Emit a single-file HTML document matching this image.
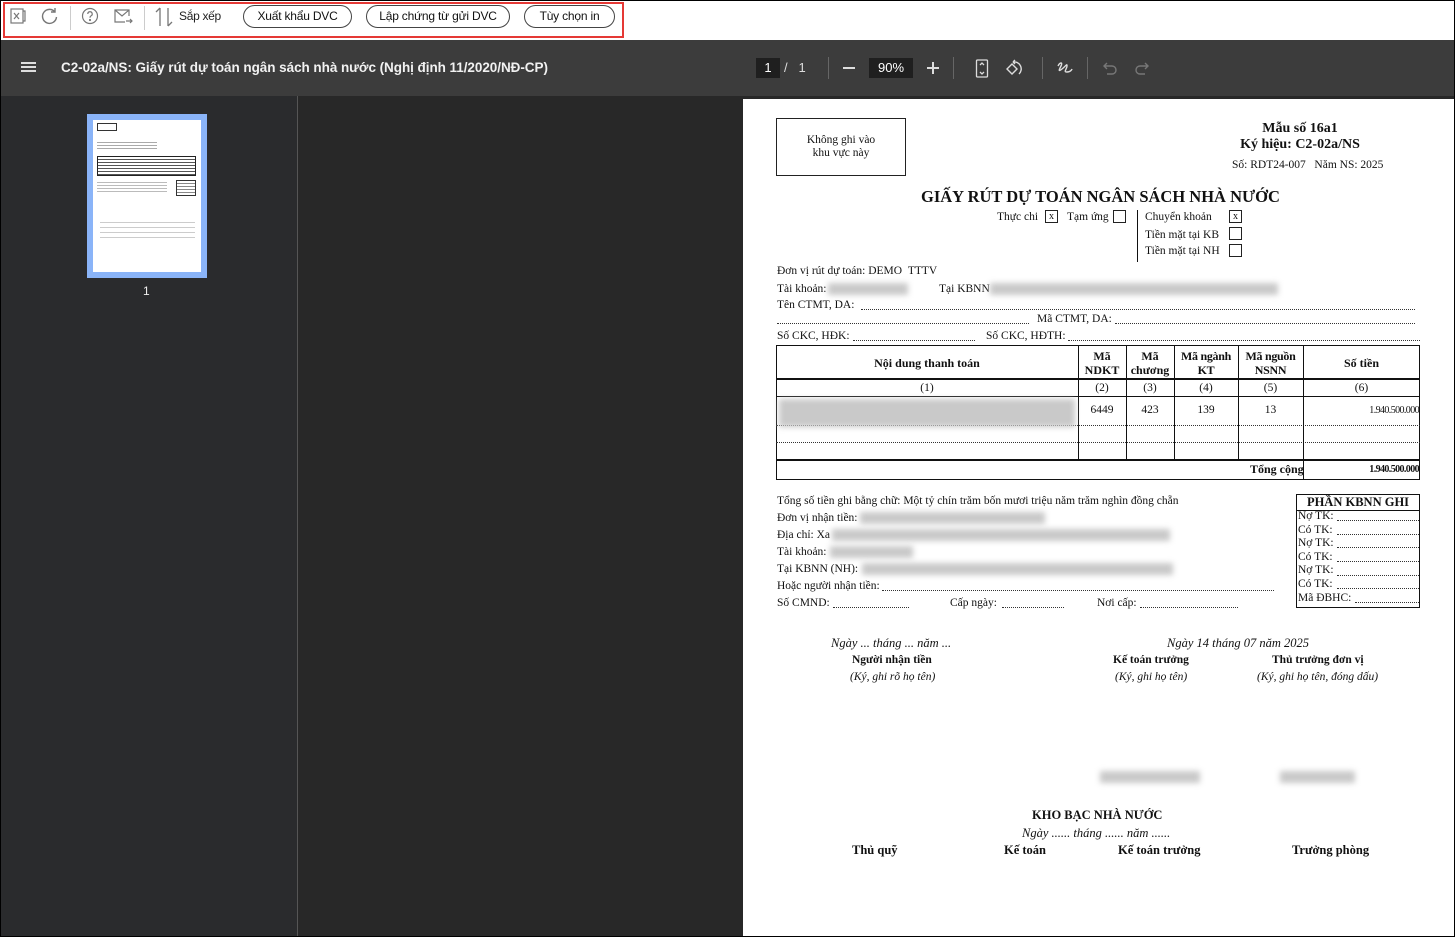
<!DOCTYPE html>
<html><head><meta charset="utf-8"><style>
*{margin:0;padding:0;box-sizing:border-box}
body{width:1455px;height:937px;overflow:hidden;position:relative;background:#fff;font-family:"Liberation Sans",sans-serif}
.a{position:absolute;white-space:nowrap}
.btn{position:absolute;top:5px;height:23px;border:1px solid #444;border-radius:12px;font-size:12px;line-height:21px;text-align:center;color:#111;letter-spacing:-0.2px}
.doc{font-family:"Liberation Serif",serif;font-size:11.5px;color:#111}
.b{font-weight:bold}.i{font-style:italic}
.blur{position:absolute;background:#c9c9c9;filter:blur(3px)}
.cb{position:absolute;width:13px;height:13px;border:1px solid #222;font-size:10px;line-height:11px;text-align:center}
.ln{position:absolute;background:#111}
.dl{position:absolute;border-top:1px dotted #333;height:0}
</style></head><body>
<div class="a" style="left:0;top:0;width:1455px;height:937px;border:1px solid #000;z-index:9;pointer-events:none"></div>
<div class="a" style="left:0;top:0;width:1455px;height:40px;background:#fff"></div>
<div class="a" style="left:3px;top:2px;width:621px;height:36px;border:2px solid #e53935"></div>
<svg class="a" style="left:9px;top:7px" width="18" height="18" viewBox="0 0 18 18" fill="none" stroke="#777" stroke-width="1.2"><rect x="2" y="2" width="12" height="14"/><path d="M14 4h2v10h-2M5 6l5 6M10 6l-5 6"/></svg>
<svg class="a" style="left:41px;top:7px" width="18" height="18" viewBox="0 0 18 18" fill="none" stroke="#777" stroke-width="1.4"><path d="M14 5A7 7 0 1 0 15.5 10"/><path d="M14 1v4h-4"/></svg>
<div class="a" style="left:70px;top:6px;width:1px;height:24px;background:#ccc"></div>
<svg class="a" style="left:81px;top:7px" width="18" height="18" viewBox="0 0 18 18" fill="none" stroke="#777" stroke-width="1.2"><circle cx="9" cy="9" r="7.5"/><path d="M6.8 7a2.2 2.2 0 1 1 3 2c-.7.4-.8.8-.8 1.8"/><circle cx="9" cy="13" r=".5" fill="#777"/></svg>
<svg class="a" style="left:114px;top:8px" width="19" height="17" viewBox="0 0 19 17" fill="none" stroke="#777" stroke-width="1.2"><path d="M15 8V2H1v12h10"/><path d="M1 2l7 6 7-6M12 13h6M16 11l2 2-2 2"/></svg>
<div class="a" style="left:144px;top:6px;width:1px;height:24px;background:#ccc"></div>
<svg class="a" style="left:155px;top:6px" width="18" height="22" viewBox="0 0 18 22" fill="none" stroke="#777" stroke-width="1.3"><path d="M5 2v18M1 6l4-4M13 2v18M17 16l-4 4"/></svg>
<div class="a" style="left:179px;top:9px;font-size:12px;color:#222;letter-spacing:-0.3px">Sắp xếp</div>
<div class="btn" style="left:243px;width:109px">Xuất khẩu DVC</div>
<div class="btn" style="left:366px;width:144px">Lập chứng từ gửi DVC</div>
<div class="btn" style="left:524px;width:91px">Tùy chọn in</div>
<div class="a" style="left:0;top:40px;width:1455px;height:56px;background:#3c3c3c"></div>
<div class="a" style="left:21px;top:62px;width:15px;height:2px;background:#ddd;box-shadow:0 4px 0 #ddd,0 8px 0 #ddd"></div>
<div class="a" style="left:61px;top:60px;font-size:13.5px;font-weight:bold;color:#f1f1f1;letter-spacing:-0.05px">C2-02a/NS: Giấy rút dự toán ngân sách nhà nước (Nghị định 11/2020/NĐ-CP)</div>
<div class="a" style="left:756px;top:58px;width:24px;height:20px;background:#1f1f1f;color:#fff;font-size:13px;text-align:center;line-height:20px">1</div>
<div class="a" style="left:784px;top:60px;color:#ddd;font-size:13px">/&nbsp;&nbsp;&nbsp;1</div>
<div class="a" style="left:828px;top:57px;width:1px;height:22px;background:#666"></div>
<div class="a" style="left:843px;top:67px;width:12px;height:2px;background:#ddd"></div>
<div class="a" style="left:869px;top:58px;width:44px;height:20px;background:#1f1f1f;color:#fff;font-size:13px;text-align:center;line-height:20px">90%</div>
<div class="a" style="left:927px;top:67px;width:12px;height:2px;background:#ddd"></div>
<div class="a" style="left:932px;top:62px;width:2px;height:12px;background:#ddd"></div>
<div class="a" style="left:953px;top:57px;width:1px;height:22px;background:#666"></div>
<svg class="a" style="left:975px;top:59px" width="14" height="19" viewBox="0 0 14 19" fill="none" stroke="#ddd" stroke-width="1.3"><rect x="1.5" y="1" width="11" height="17" rx="1"/><path d="M5 6l2-2 2 2M5 13l2 2 2-2"/></svg>
<svg class="a" style="left:1004px;top:59px" width="20" height="19" viewBox="0 0 20 19" fill="none" stroke="#ddd" stroke-width="1.4"><path d="M3 10l5-5 5 5-5 5z"/><path d="M9 3a7 7 0 0 1 6 12M9 3l2-2M9 3l2 2"/></svg>
<div class="a" style="left:1042px;top:57px;width:1px;height:22px;background:#666"></div>
<svg class="a" style="left:1057px;top:60px" width="16" height="16" viewBox="0 0 16 16" fill="none" stroke="#ddd" stroke-width="1.4"><path d="M1 6c2-4 5-4 3 0s-3 6 1 3 5-6 5-3-4 6 0 6 5-3 5-3"/></svg>
<div class="a" style="left:1087px;top:57px;width:1px;height:22px;background:#666"></div>
<svg class="a" style="left:1103px;top:61px" width="14" height="14" viewBox="0 0 14 14" fill="none" stroke="#777" stroke-width="1.4"><path d="M4 2L1 5l3 3M1 5h8a4 4 0 0 1 0 8H4"/></svg>
<svg class="a" style="left:1135px;top:61px" width="14" height="14" viewBox="0 0 14 14" fill="none" stroke="#777" stroke-width="1.4"><path d="M10 2l3 3-3 3M13 5H5a4 4 0 0 0 0 8h5"/></svg>
<div class="a" style="left:0;top:96px;width:297px;height:841px;background:#2a2b2d"></div>
<div class="a" style="left:297px;top:96px;width:1px;height:841px;background:#555"></div>
<div class="a" style="left:298px;top:96px;width:1157px;height:841px;background:#282828"></div>
<div class="a" style="left:87px;top:114px;width:120px;height:164px;background:#8ab4f8"></div>
<div class="a" style="left:93px;top:120px;width:108px;height:152px;background:#fff"></div>
<div class="a" style="left:97px;top:123px;width:20px;height:8px;border:1px solid #333"></div>
<div class="a" style="left:97px;top:156px;width:99px;height:20px;border:1px solid #222;background:repeating-linear-gradient(#fff 0 2px,#555 2px 3px)"></div>
<div class="a" style="left:176px;top:180px;width:20px;height:16px;border:1px solid #333;background:repeating-linear-gradient(#fff 0 2px,#888 2px 3px)"></div>
<div class="a" style="left:97px;top:140px;width:60px;height:10px;background:repeating-linear-gradient(#fff 0 2px,#aaa 2px 3px)"></div>
<div class="a" style="left:97px;top:180px;width:70px;height:14px;background:repeating-linear-gradient(#fff 0 2px,#bbb 2px 3px)"></div>
<div class="a" style="left:100px;top:218px;width:95px;height:20px;background:repeating-linear-gradient(#fff 0 4px,#ccc 4px 5px)"></div>
<div class="a" style="left:143px;top:284px;color:#eee;font-size:12px">1</div>
<div class="a" style="left:743px;top:99px;width:712px;height:838px;background:#fff"></div>
<div class="doc">
<div class="a" style="left:776px;top:118px;width:130px;height:58px;border:1px solid #222"></div>
<div class="a" style="left:776px;top:134px;width:130px;text-align:center;line-height:13px">Không ghi vào<br>khu vực này</div>
<div class="a b" style="left:1230px;top:121px;width:140px;text-align:center;font-size:14px">Mẫu số 16a1</div>
<div class="a b" style="left:1220px;top:137px;width:160px;text-align:center;font-size:14px">Ký hiệu: C2-02a/NS</div>
<div class="a" style="left:1232px;top:159px">Số: RDT24-007&nbsp;&nbsp;&nbsp;Năm NS: 2025</div>
<div class="a b" style="left:921px;top:187px;font-size:16.5px">GIẤY RÚT DỰ TOÁN NGÂN SÁCH NHÀ NƯỚC</div>
<div class="a" style="left:997px;top:211px">Thực chi</div><div class="cb" style="left:1045px;top:210px">x</div>
<div class="a" style="left:1067px;top:211px">Tạm ứng</div><div class="cb" style="left:1113px;top:210px"></div>
<div class="ln" style="left:1137px;top:210px;width:1px;height:52px"></div>
<div class="a" style="left:1145px;top:211px">Chuyển khoản</div><div class="cb" style="left:1229px;top:210px">x</div>
<div class="a" style="left:1145px;top:229px">Tiền mặt tại KB</div><div class="cb" style="left:1229px;top:227px"></div>
<div class="a" style="left:1145px;top:245px">Tiền mặt tại NH</div><div class="cb" style="left:1229px;top:244px"></div>
<div class="a" style="left:777px;top:265px">Đơn vị rút dự toán: DEMO&nbsp;&nbsp;TTTV</div>
<div class="a" style="left:777px;top:283px">Tài khoản:</div><div class="blur" style="left:828px;top:283px;width:80px;height:12px"></div>
<div class="a" style="left:939px;top:283px">Tại KBNN</div><div class="blur" style="left:990px;top:283px;width:288px;height:12px"></div>
<div class="a" style="left:777px;top:299px">Tên CTMT, DA:</div><div class="dl" style="left:861px;top:309px;width:554px"></div>
<div class="dl" style="left:777px;top:323px;width:252px"></div>
<div class="a" style="left:1037px;top:313px">Mã CTMT, DA:</div><div class="dl" style="left:1115px;top:323px;width:300px"></div>
<div class="a" style="left:777px;top:330px">Số CKC, HĐK:</div><div class="dl" style="left:853px;top:340px;width:122px"></div>
<div class="a" style="left:986px;top:330px">Số CKC, HĐTH:</div><div class="dl" style="left:1068px;top:340px;width:352px"></div>
<div class="a" style="left:776px;top:345px;width:644px;height:135px;border:1.5px solid #111"></div>
<div class="ln" style="left:776px;top:378px;width:644px;height:1.5px"></div>
<div class="ln" style="left:776px;top:396px;width:644px;height:1px"></div>
<div class="dl" style="left:776px;top:425px;width:644px"></div>
<div class="dl" style="left:776px;top:442px;width:644px"></div>
<div class="ln" style="left:776px;top:459px;width:644px;height:1.5px"></div>
<div class="ln" style="left:1078px;top:345px;width:1px;height:114px"></div>
<div class="ln" style="left:1126px;top:345px;width:1px;height:114px"></div>
<div class="ln" style="left:1174px;top:345px;width:1px;height:114px"></div>
<div class="ln" style="left:1238px;top:345px;width:1px;height:114px"></div>
<div class="ln" style="left:1303px;top:345px;width:1px;height:135px"></div>
<div class="a b" style="left:776px;top:356px;width:302px;text-align:center;font-size:12px">Nội dung thanh toán</div>
<div class="a b" style="left:1078px;top:349px;width:48px;text-align:center;font-size:12px;line-height:14px">Mã<br>NDKT</div>
<div class="a b" style="left:1126px;top:349px;width:48px;text-align:center;font-size:12px;line-height:14px">Mã<br>chương</div>
<div class="a b" style="left:1174px;top:349px;width:64px;text-align:center;font-size:12px;line-height:14px;letter-spacing:-0.3px">Mã ngành<br>KT</div>
<div class="a b" style="left:1238px;top:349px;width:65px;text-align:center;font-size:12px;line-height:14px;letter-spacing:-0.3px">Mã nguồn<br>NSNN</div>
<div class="a b" style="left:1303px;top:356px;width:117px;text-align:center;font-size:12px">Số tiền</div>
<div class="a" style="left:776px;top:382px;width:302px;text-align:center">(1)</div>
<div class="a" style="left:1078px;top:382px;width:48px;text-align:center">(2)</div>
<div class="a" style="left:1126px;top:382px;width:48px;text-align:center">(3)</div>
<div class="a" style="left:1174px;top:382px;width:64px;text-align:center">(4)</div>
<div class="a" style="left:1238px;top:382px;width:65px;text-align:center">(5)</div>
<div class="a" style="left:1303px;top:382px;width:117px;text-align:center">(6)</div>
<div class="blur" style="left:779px;top:399px;width:296px;height:28px"></div>
<div class="a" style="left:1078px;top:404px;width:48px;text-align:center">6449</div>
<div class="a" style="left:1126px;top:404px;width:48px;text-align:center">423</div>
<div class="a" style="left:1174px;top:404px;width:64px;text-align:center">139</div>
<div class="a" style="left:1238px;top:404px;width:65px;text-align:center">13</div>
<div class="a" style="left:1303px;top:405px;width:116px;text-align:right;font-size:10px;letter-spacing:-0.6px">1.940.500.000</div>
<div class="a b" style="left:1250px;top:462px;font-size:12px">Tổng cộng</div>
<div class="a b" style="left:1303px;top:464px;width:116px;text-align:right;font-size:10px;letter-spacing:-0.6px">1.940.500.000</div>
<div class="a" style="left:777px;top:495px">Tổng số tiền ghi bằng chữ: Một tỷ chín trăm bốn mươi triệu năm trăm nghìn đồng chẵn</div>
<div class="a" style="left:777px;top:512px">Đơn vị nhận tiền:</div><div class="blur" style="left:860px;top:512px;width:185px;height:12px"></div>
<div class="a" style="left:777px;top:529px">Địa chỉ: Xa</div><div class="blur" style="left:832px;top:529px;width:338px;height:12px"></div>
<div class="a" style="left:777px;top:546px">Tài khoản:</div><div class="blur" style="left:830px;top:546px;width:83px;height:12px"></div>
<div class="a" style="left:777px;top:563px">Tại KBNN (NH):</div><div class="blur" style="left:862px;top:563px;width:311px;height:12px"></div>
<div class="a" style="left:777px;top:580px">Hoặc người nhận tiền:</div><div class="dl" style="left:882px;top:590px;width:392px"></div>
<div class="a" style="left:777px;top:597px">Số CMND:</div><div class="dl" style="left:833px;top:607px;width:76px"></div>
<div class="a" style="left:950px;top:597px">Cấp ngày:</div><div class="dl" style="left:1002px;top:607px;width:62px"></div>
<div class="a" style="left:1097px;top:597px">Nơi cấp:</div><div class="dl" style="left:1140px;top:607px;width:98px"></div>
<div class="a" style="left:1296px;top:494px;width:124px;height:114px;border:1.5px solid #111"></div>
<div class="ln" style="left:1296px;top:510px;width:124px;height:1px"></div>
<div class="a b" style="left:1296px;top:495px;width:124px;text-align:center;font-size:12.5px">PHẦN KBNN GHI</div>
<div class="a" style="left:1298px;top:510px;line-height:13.6px">Nợ TK:<br>Có TK:<br>Nợ TK:<br>Có TK:<br>Nợ TK:<br>Có TK:<br>Mã ĐBHC:</div>
<div class="dl" style="left:1337px;top:520px;width:82px"></div><div class="dl" style="left:1337px;top:534px;width:82px"></div><div class="dl" style="left:1337px;top:547px;width:82px"></div><div class="dl" style="left:1337px;top:561px;width:82px"></div><div class="dl" style="left:1337px;top:575px;width:82px"></div><div class="dl" style="left:1337px;top:588px;width:82px"></div><div class="dl" style="left:1355px;top:602px;width:64px"></div>
<div class="a i" style="left:831px;top:636px;font-size:12.5px">Ngày ... tháng ... năm ...</div>
<div class="a i" style="left:1167px;top:636px;font-size:12.5px">Ngày 14 tháng 07 năm 2025</div>
<div class="a b" style="left:852px;top:654px">Người nhận tiền</div>
<div class="a b" style="left:1113px;top:654px">Kế toán trưởng</div>
<div class="a b" style="left:1272px;top:654px">Thủ trưởng đơn vị</div>
<div class="a i" style="left:850px;top:671px">(Ký, ghi rõ họ tên)</div>
<div class="a i" style="left:1115px;top:671px">(Ký, ghi họ tên)</div>
<div class="a i" style="left:1257px;top:671px">(Ký, ghi họ tên, đóng dấu)</div>
<div class="blur" style="left:1100px;top:771px;width:100px;height:12px"></div>
<div class="blur" style="left:1280px;top:771px;width:75px;height:12px"></div>
<div class="a b" style="left:1032px;top:808px;font-size:12.5px">KHO BẠC NHÀ NƯỚC</div>
<div class="a i" style="left:1022px;top:826px;font-size:12.5px">Ngày ...... tháng ...... năm ......</div>
<div class="a b" style="left:852px;top:843px;font-size:12.5px">Thủ quỹ</div>
<div class="a b" style="left:1004px;top:843px;font-size:12.5px">Kế toán</div>
<div class="a b" style="left:1118px;top:843px;font-size:12.5px">Kế toán trưởng</div>
<div class="a b" style="left:1292px;top:843px;font-size:12.5px">Trưởng phòng</div>
</div>
</body></html>
